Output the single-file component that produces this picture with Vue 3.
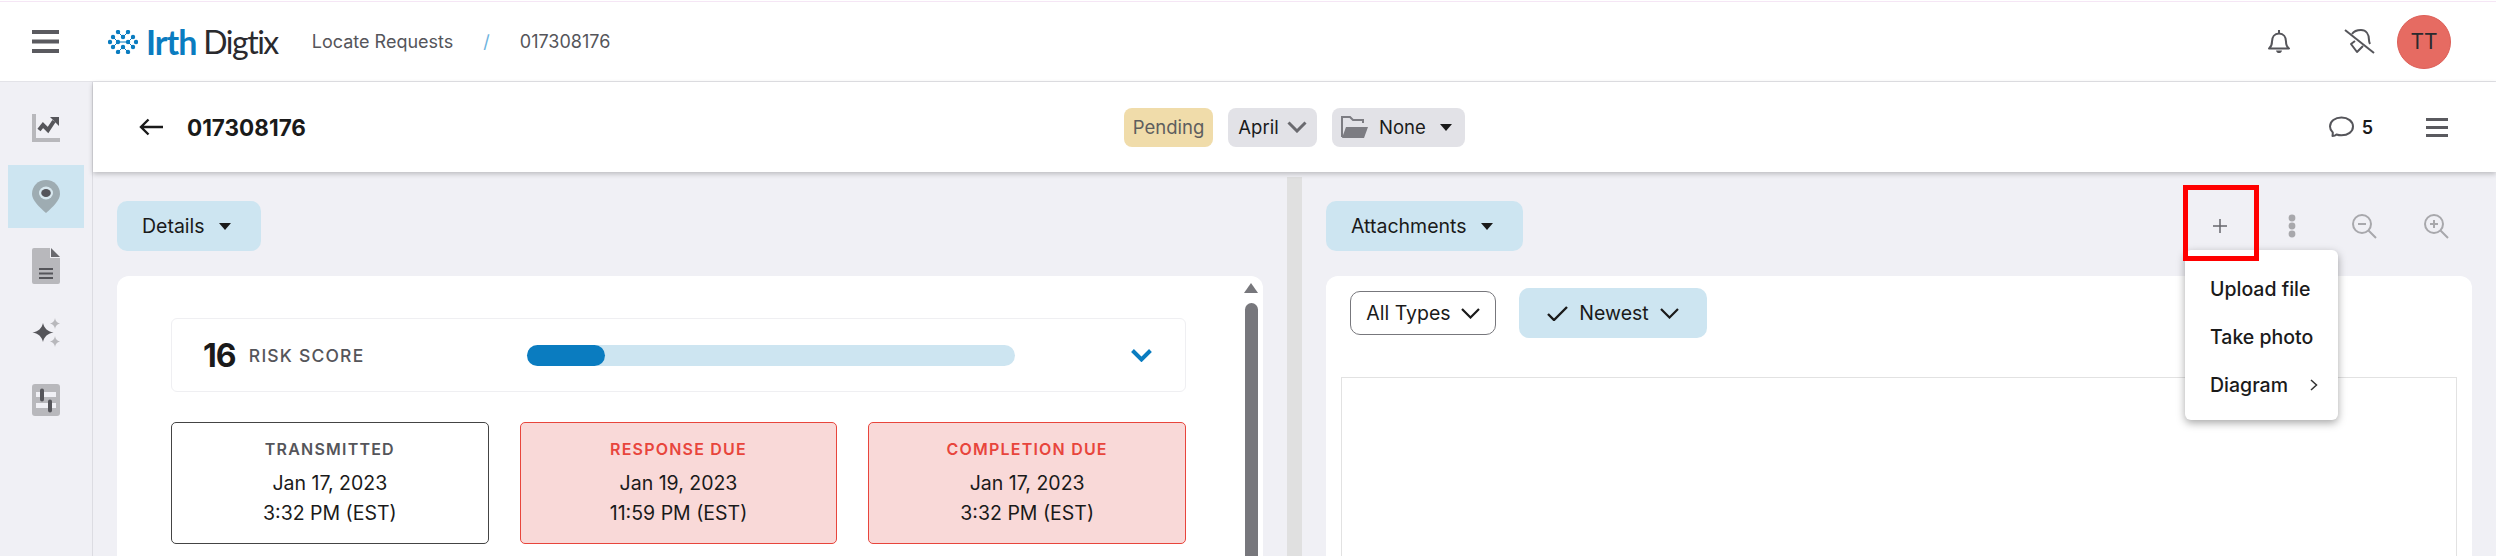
<script setup>
const navItems = ['chart', 'pin', 'doc', 'spark', 'sliders']
const dateCards = [
  { label: 'TRANSMITTED', date: 'Jan 17, 2023', time: '3:32 PM (EST)', late: false },
  { label: 'RESPONSE DUE', date: 'Jan 19, 2023', time: '11:59 PM (EST)', late: true },
  { label: 'COMPLETION DUE', date: 'Jan 17, 2023', time: '3:32 PM (EST)', late: true },
]
const logoDots = [
  [10, 2], [20, 2], [5, 7], [15, 7], [25, 7], [2, 12], [10, 12], [20, 12], [28, 12],
  [5, 17], [15, 17], [25, 17], [10, 22], [20, 22],
]
</script>

<template>
  <div class="page">
    <header class="topbar">
      <button class="menu-btn">
        <svg width="27" height="23" viewBox="0 0 27 23"><path d="M0 2h27M0 11.500h27M0 21h27" stroke="#5a5a5f" stroke-width="4" /></svg>
      </button>
      <div class="logo">
        <svg class="logo-mark" width="30" height="24" viewBox="0 0 30 24">
          <path d="M5 7l5 5h10l5 5M25 7l-5 5M5 17l5-5M10 2l5 5 5-5M10 22l5-5 5 5" fill="none" stroke="#0a7cc0" stroke-width="1" />
          <circle v-for="(d, i) in logoDots" :key="i" :cx="d[0]" :cy="d[1]" r="2.200" fill="#0a7cc0" />
        </svg>
        <span class="logo-irth">Irth</span>
        <span class="logo-digtix">Digtix</span>
      </div>
      <nav class="crumbs">
        <span>Locate Requests</span>
        <span class="crumb-sep">/</span>
        <span>017308176</span>
      </nav>
      <div class="top-actions">
        <svg class="bell" width="22" height="25" viewBox="0 0 22 25" fill="none" stroke="#55555a" stroke-width="2">
          <path d="M1 19.500c2-1.500 3-3 3-7 0-4.500 2.500-8 7-8s7 3.500 7 8c0 4 1 5.500 3 7z" stroke-linejoin="round" />
          <path d="M11 1v3" />
          <path d="M8 21.500c.5 2 1.500 2.500 3 2.500s2.500-.5 3-2.500z" fill="#55555a" stroke="none" />
        </svg>
        <svg class="bell-off" width="31" height="25" viewBox="0 0 31 25" fill="none" stroke="#55555a" stroke-width="2">
          <path d="M1 1l29 23" />
          <path d="M8 5c2-3 6-4 9-4 5 0 8 4 8 10 0 2 .5 3 1 4" />
          <path d="M11 12l-4 3 6 8 6-6" stroke-linejoin="round" />
        </svg>
        <div class="avatar">TT</div>
      </div>
    </header>

    <div class="shell">
      <aside class="sidebar">
        <div
          v-for="item in navItems"
          :key="item"
          class="nav-item"
          :class="[`nav-item--${item}`, { 'nav-item--active': item === 'pin' }]"
        >
          <svg v-if="item === 'chart'" width="28" height="28" viewBox="0 0 28 28">
            <path d="M2 0v26h26" fill="none" stroke="#b8b8bc" stroke-width="4" />
            <path d="M7 16l4-5 5 5 6-9" fill="none" stroke="#55555a" stroke-width="4" />
            <path d="M18 3h9v9z" fill="#55555a" />
          </svg>
          <svg v-else-if="item === 'pin'" width="28" height="33" viewBox="0 0 28 33">
            <path d="M14 0C6 0 0 6 0 14c0 6 7 13 14 19 7-6 14-13 14-19C28 6 22 0 14 0z" fill="#9eacb2" />
            <ellipse cx="14" cy="13" rx="7" ry="6.500" fill="#d8e8ef" />
            <ellipse cx="14" cy="13" rx="4.800" ry="4" fill="#55555a" />
          </svg>
          <svg v-else-if="item === 'doc'" width="28" height="36" viewBox="0 0 28 36">
            <path d="M0 2a2 2 0 0 1 2-2h16v10h10v24a2 2 0 0 1-2 2H2a2 2 0 0 1-2-2z" fill="#b8b8bc" />
            <path d="M19 0l9 9h-9z" fill="#6a6a6f" />
            <path d="M7 21h14M7 25.500h14M7 30h14" stroke="#55555a" stroke-width="2" />
          </svg>
          <svg v-else-if="item === 'spark'" width="28" height="29" viewBox="0 0 28 29">
            <path d="M11 3c1.200 5 4 8.200 10.500 9.500-6.500 1.300-9.300 4.500-10.500 9.500-1.200-5-4-8.200-10.500-9.500C7 11.200 9.800 8 11 3z" transform="translate(0 2)" fill="#55555a" />
            <path d="M23 0c.4 3 1.800 4.600 5 5.500-3.200.9-4.600 2.500-5 5.500-.4-3-1.800-4.600-5-5.500 3.200-.9 4.600-2.500 5-5.500zM23 18c.4 3 1.800 4.600 5 5.500-3.200.9-4.600 2.500-5 5.500-.4-3-1.800-4.600-5-5.500 3.200-.9 4.600-2.500 5-5.500z" fill="#b8b8bc" />
          </svg>
          <svg v-else width="28" height="32" viewBox="0 0 28 32">
            <rect width="28" height="32" rx="3" fill="#b8b8bc" />
            <path d="M4 10.500h20M4 21.500h20" stroke="#f0f0f5" stroke-width="5" />
            <path d="M10 6.500v9M18 17.500v9" stroke="#55555a" stroke-width="4" stroke-linecap="round" />
          </svg>
        </div>
      </aside>

      <main class="main">
        <div class="subheader">
          <svg class="back" width="24" height="18" viewBox="0 0 24 18" fill="none" stroke="#1a1a1a" stroke-width="2.400">
            <path d="M24 9H2M9.500 1.500L2 9l7.500 7.500" />
          </svg>
          <h1 class="ticket">017308176</h1>
          <div class="status-group">
            <span class="pill pill--pending">Pending</span>
            <span class="pill pill--month">April
              <svg width="20" height="12" viewBox="0 0 20 12" fill="none" stroke="#6a6a6f" stroke-width="3"><path d="M1.500 1.500L10 10l8.500-8.500" /></svg>
            </span>
            <span class="pill pill--folder">
              <svg width="27" height="24" viewBox="0 0 27 24">
                <path d="M1 22V2h8l3 3h10v3" fill="none" stroke="#7c7c82" stroke-width="2" />
                <path d="M1 23l4-11h22l-4 11z" fill="#7c7c82" />
              </svg>
              <span class="folder-name">None</span>
              <i class="caret"></i>
            </span>
          </div>
          <div class="sub-actions">
            <svg width="25" height="22" viewBox="0 0 25 22" fill="none" stroke="#55555a" stroke-width="2">
              <path d="M3.500 20c1.500 0 3-.5 4-1.500 1.500.5 3 .8 5 .8 6.500 0 11.500-3.600 11.500-8.700S19 1.500 12.500 1.500 1 5.200 1 10.600c0 2.300 1 4.400 2.800 6 0 1.300-.3 2.400-.3 3.400z" stroke-linejoin="round" />
            </svg>
            <span class="comment-count">5</span>
            <svg class="sub-menu" width="22" height="19" viewBox="0 0 22 19"><path d="M0 1.500h22M0 9.500h22M0 17.500h22" stroke="#5a5a5f" stroke-width="3" /></svg>
          </div>
        </div>

        <div class="panels">
          <section class="panel">
            <div class="panel-head">
              <button class="head-btn">Details <i class="caret"></i></button>
            </div>
            <div class="card card--details">
              <div class="card-body">
                <div class="risk">
                  <span class="risk-num">16</span>
                  <span class="risk-label">RISK SCORE</span>
                  <div class="risk-bar"><div class="risk-fill" :style="{ width: '16%' }"></div></div>
                  <svg width="21" height="13" viewBox="0 0 21 13" fill="none" stroke="#0a7cc0" stroke-width="4"><path d="M1.500 1.500L10.500 10.500 19.500 1.500" /></svg>
                </div>
                <div class="dates">
                  <div v-for="c in dateCards" :key="c.label" class="date-card" :class="{ 'date-card--late': c.late }">
                    <div class="date-label">{{ c.label }}</div>
                    <div class="date-line">{{ c.date }}</div>
                    <div class="date-line">{{ c.time }}</div>
                  </div>
                </div>
              </div>
              <div class="scrollbar">
                <i class="scroll-up"></i>
                <div class="scroll-thumb"></div>
              </div>
            </div>
          </section>

          <div class="splitter"></div>

          <section class="panel">
            <div class="panel-head">
              <button class="head-btn">Attachments <i class="caret"></i></button>
              <div class="tools">
                <div class="tool tool--add">
                  <svg width="14" height="14" viewBox="0 0 14 14"><path d="M7 0v14M0 7h14" stroke="#66666c" stroke-width="1.500" /></svg>
                  <div class="menu">
                    <div class="menu-item">Upload file</div>
                    <div class="menu-item">Take photo</div>
                    <div class="menu-item">Diagram
                      <svg width="8" height="12" viewBox="0 0 8 12" fill="none" stroke="#333" stroke-width="1.500"><path d="M1 1l5.500 5L1 11" /></svg>
                    </div>
                  </div>
                  <div class="highlight"></div>
                </div>
                <div class="tool">
                  <svg width="8" height="24" viewBox="0 0 8 24" fill="#a8a8ac"><circle cx="4" cy="4" r="3.400" /><circle cx="4" cy="12" r="3.400" /><circle cx="4" cy="20" r="3.400" /></svg>
                </div>
                <div class="tool">
                  <svg width="25" height="25" viewBox="0 0 25 25" fill="none" stroke="#a8a8ac" stroke-width="2">
                    <circle cx="10" cy="10" r="9" /><path d="M6 10h8M16.500 16.500L24 24" />
                  </svg>
                </div>
                <div class="tool">
                  <svg width="25" height="25" viewBox="0 0 25 25" fill="none" stroke="#a8a8ac" stroke-width="2">
                    <circle cx="10" cy="10" r="9" /><path d="M6 10h8M10 6v8M16.500 16.500L24 24" />
                  </svg>
                </div>
              </div>
            </div>
            <div class="card card--files">
              <div class="filters">
                <button class="filter">All Types
                  <svg width="19" height="11" viewBox="0 0 19 11" fill="none" stroke="#1a1a1a" stroke-width="2.200"><path d="M1 1l8.500 8.500L18 1" /></svg>
                </button>
                <button class="sort">
                  <svg width="21" height="15" viewBox="0 0 21 15" fill="none" stroke="#1a1a1a" stroke-width="2.400"><path d="M1 8l6 6L20 1" /></svg>
                  <span class="sort-name">Newest</span>
                  <svg width="19" height="11" viewBox="0 0 19 11" fill="none" stroke="#1a1a1a" stroke-width="2.200"><path d="M1 1l8.500 8.500L18 1" /></svg>
                </button>
              </div>
              <div class="preview"></div>
            </div>
          </section>
        </div>
      </main>
    </div>
  </div>
</template>

<style scoped>
.page {
  height: 556px;
  overflow: hidden;
  display: flex;
  flex-direction: column;
  background: #f0f0f5;
  border-top: 1px solid #fff;
  box-sizing: border-box;
  font-family: Inter, "Liberation Sans", sans-serif;
  color: #1a1a1a;
}

.topbar {
  flex: none;
  height: 79px;
  display: flex;
  align-items: center;
  background: #fff;
  border-top: 1px solid #f5e6f5;
  border-bottom: 1px solid #e3e3e8;
  box-sizing: content-box;
}

button {
  font: inherit;
  color: inherit;
  border: 0;
  cursor: pointer;
}

.menu-btn {
  padding: 0;
  margin-left: 32px;
  background: none;
  display: flex;
}

.logo {
  margin-left: 49px;
  display: flex;
  align-items: center;
  font-family: Lato, sans-serif;
  line-height: 40px;
}

.logo-irth {
  margin-left: 8px;
  font-size: 34px;
  font-weight: 700;
  color: #0a7cc0;
  letter-spacing: -1px;
}

.logo-digtix {
  margin-left: 7px;
  font-size: 32px;
  color: #2a2a2e;
  letter-spacing: -1.500px;
}

.crumbs {
  margin-left: 34px;
  display: flex;
  gap: 30px;
  font-size: 18px;
  color: #55555a;
}

.crumb-sep {
  color: #6db3de;
}

.top-actions {
  margin-left: auto;
  margin-right: 45px;
  display: flex;
  align-items: center;
}

.bell-off {
  margin-left: 54px;
}

.avatar {
  margin-left: 22px;
  width: 54px;
  height: 54px;
  border-radius: 50%;
  background: #e66b62;
  border: 1px solid #dd5f58;
  box-sizing: border-box;
  display: flex;
  align-items: center;
  justify-content: center;
  font-size: 21px;
  color: #2a2a2e;
}

.shell {
  flex: 1;
  min-height: 0;
  display: flex;
}

.sidebar {
  flex: none;
  width: 92px;
  border-right: 1px solid #dcdce2;
  padding-top: 14px;
  display: flex;
  flex-direction: column;
  align-items: center;
  gap: 6px;
}

.nav-item {
  flex: none;
  display: flex;
  align-items: center;
  justify-content: center;
  width: 76px;
  height: 63px;
}

.nav-item--active {
  background: #cde5f1;
}

.nav-item--spark {
  height: 59px;
}

.main {
  flex: 1;
  min-width: 0;
  display: flex;
  flex-direction: column;
}

.subheader {
  flex: none;
  height: 90px;
  display: flex;
  align-items: center;
  position: relative;
  z-index: 1;
  background: #fff;
  box-shadow: 0 2px 5px rgba(0, 0, 0, 0.22);
}

.back {
  margin-left: 46px;
}

.ticket {
  margin: 0 0 0 24px;
  font-size: 22.500px;
  font-weight: 700;
  width: 134px;
}

.status-group {
  margin-left: 803px;
  display: flex;
  gap: 15px;
}

.pill {
  height: 39px;
  box-sizing: border-box;
  border-radius: 8px;
  display: flex;
  align-items: center;
  font-size: 18.500px;
  background: #e2e2e7;
}

.pill--pending {
  width: 89px;
  justify-content: center;
  background: #f0dcaa;
  color: #5e5e5e;
}

.pill--month {
  width: 89px;
  justify-content: center;
  gap: 8px;
}

.pill--folder {
  width: 133px;
  padding-left: 9px;
}

.folder-name {
  margin-left: 11px;
}

.caret {
  display: inline-block;
  width: 0;
  height: 0;
  border-style: solid;
  border-width: 7px 6.500px 0;
  border-color: #1a1a1a transparent transparent;
}

.pill--folder .caret {
  margin-left: 14px;
}

.sub-actions {
  margin-left: auto;
  margin-right: 48px;
  display: flex;
  align-items: center;
}

.comment-count {
  margin-left: 8px;
  font-size: 18px;
  font-weight: 600;
}

.sub-menu {
  margin-left: 53px;
}

.panels {
  flex: 1;
  min-height: 0;
  display: flex;
}

.panel {
  flex: 1;
  min-width: 0;
  padding: 29px 24px 0;
  display: flex;
  flex-direction: column;
}

.splitter {
  flex: none;
  width: 15px;
  margin-top: 5px;
  background: #e0e0e0;
}

.panel-head {
  flex: none;
  display: flex;
  justify-content: space-between;
  margin-bottom: 25px;
}

.head-btn {
  height: 50px;
  padding: 0 30px 0 25px;
  border-radius: 10px;
  background: #cde5f1;
  display: flex;
  align-items: center;
  gap: 14px;
  font-size: 19.500px;
}

.tools {
  display: flex;
}

.tool {
  width: 72px;
  height: 50px;
  display: flex;
  align-items: center;
  justify-content: center;
  position: relative;
}

.tool--add {
  z-index: 2;
}

.highlight {
  position: absolute;
  left: -1px;
  right: -3px;
  top: -16px;
  bottom: -10px;
  border: 5px solid #f00;
}

.menu {
  position: absolute;
  left: 1px;
  top: 49px;
  width: 153px;
  padding: 15px 0 11px;
  background: #fff;
  border-radius: 6px;
  box-shadow: 0 3px 8px rgba(0, 0, 0, 0.35);
}

.menu-item {
  height: 48px;
  padding: 0 20px 0 25px;
  display: flex;
  align-items: center;
  justify-content: space-between;
  font-size: 19.500px;
  font-weight: 500;
}

.card {
  height: 600px;
  flex: none;
  background: #fff;
  border-radius: 12px 12px 0 0;
}

.card--details {
  display: flex;
}

.card-body {
  flex: 1;
  min-width: 0;
  padding: 42px 58px 0 54px;
}

.scrollbar {
  flex: none;
  width: 14px;
  margin-right: 5px;
  padding-top: 7px;
  display: flex;
  flex-direction: column;
  align-items: center;
}

.scroll-up {
  width: 0;
  height: 0;
  border-style: solid;
  border-width: 0 7px 10px;
  border-color: transparent transparent #77777c;
}

.scroll-thumb {
  margin-top: 10px;
  width: 13px;
  flex: 1;
  border-radius: 7px 7px 0 0;
  background: #77777c;
}

.risk {
  height: 74px;
  box-sizing: border-box;
  padding: 0 33px 0 31px;
  border: 1px solid #efeff2;
  border-radius: 6px;
  display: flex;
  align-items: center;
}

.risk-num {
  width: 46px;
  font-size: 32px;
  font-weight: 700;
  letter-spacing: -1px;
}

.risk-label {
  width: 279px;
  font-size: 17.500px;
  font-weight: 500;
  letter-spacing: 1.200px;
  color: #55555a;
}

.risk-bar {
  flex: none;
  width: 488px;
  height: 21px;
  margin-right: 116px;
  border-radius: 11px;
  background: #cde5f1;
}

.risk-fill {
  height: 100%;
  border-radius: 11px;
  background: #0a7cc0;
}

.dates {
  margin-top: 30px;
  display: grid;
  grid-template-columns: repeat(3, 1fr);
  gap: 31px;
}

.date-card {
  height: 122px;
  box-sizing: border-box;
  padding-top: 16px;
  border: 1px solid #444;
  border-radius: 5px;
  text-align: center;
  font-size: 19.500px;
}

.date-card--late {
  border-color: #e8453c;
  background: #f9d9d8;
}

.date-label {
  margin-bottom: 9px;
  font-size: 16px;
  font-weight: 600;
  letter-spacing: 1.200px;
  line-height: 20px;
  color: #55555a;
}

.date-card--late .date-label {
  color: #e8453c;
}

.date-line {
  line-height: 30px;
}

.card--files {
  display: flex;
  flex-direction: column;
}

.filters {
  flex: none;
  height: 50px;
  margin-top: 12px;
  padding-left: 24px;
  display: flex;
  align-items: center;
  gap: 23px;
}

.filter {
  width: 146px;
  height: 44px;
  padding: 0;
  border: 1px solid #77777c;
  border-radius: 10px;
  background: #fff;
  display: flex;
  align-items: center;
  justify-content: center;
  gap: 10px;
  font-size: 19.500px;
}

.sort {
  width: 188px;
  height: 50px;
  padding: 0;
  border-radius: 10px;
  background: #cde5f1;
  display: flex;
  align-items: center;
  justify-content: center;
  gap: 10px;
  font-size: 19.500px;
}

.sort-name {
  margin: 0 1px;
}

.preview {
  flex: 1;
  margin: 39px 15px 0;
  border: 1px solid #e2e2e2;
}
</style>

<style>
html,
body {
  margin: 0;
  background: #f0f0f5;
}
</style>
